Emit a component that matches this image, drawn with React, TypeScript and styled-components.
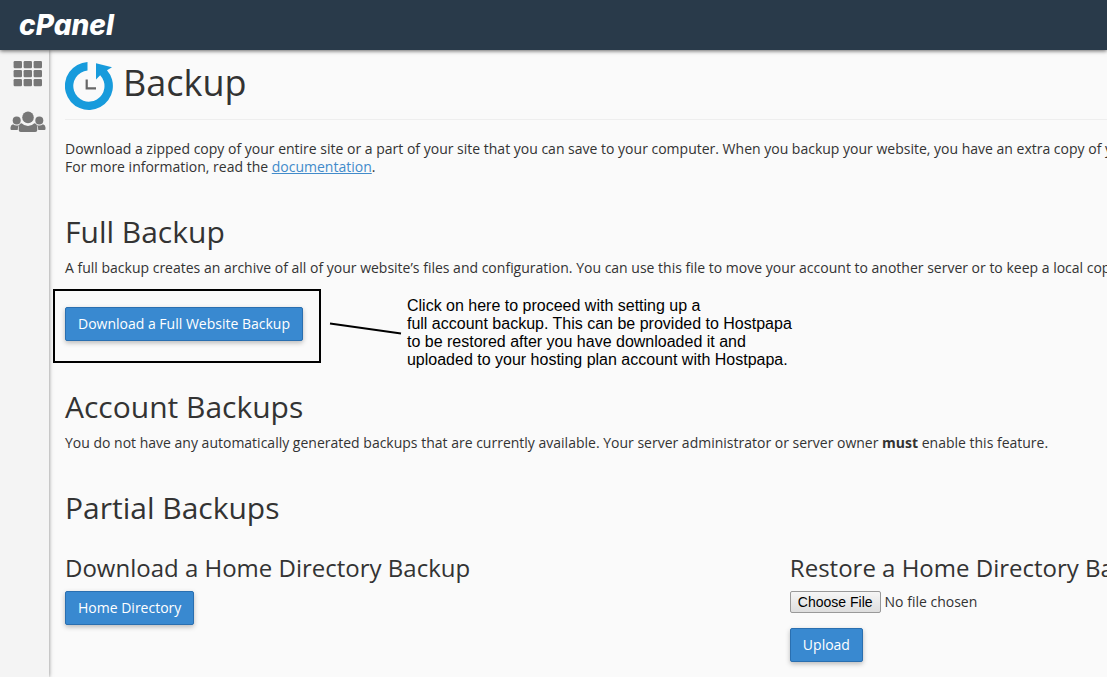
import React from "react";
import styled, { createGlobalStyle } from "styled-components";

const GlobalStyle = createGlobalStyle`
  * { box-sizing: border-box; }
  html, body, #root { height: 100%; }
  body {
    margin: 0;
    overflow: hidden;
    background: #fafafa;
    color: #333;
    font-family: "Open Sans", "Noto Sans", sans-serif;
    font-size: 14px;
    line-height: 18px;
  }
`;

const Page = styled.div`
  display: flex;
  flex-direction: column;
  min-height: 100%;
`;

const Header = styled.header`
  position: relative;
  display: flex;
  align-items: center;
  height: 50px;
  padding: 0 19px;
  background: #293a4a;
  box-shadow: 0 1px 4px rgba(0, 0, 0, 0.6);
`;

const Logo = styled.a`
  color: #fff;
  font-family: Inter, "Open Sans", sans-serif;
  font-size: 28px;
  font-style: italic;
  font-weight: 800;
  line-height: 48px;
  text-decoration: none;
`;

const Body = styled.div`
  display: flex;
  flex: 1;
`;

const Sidebar = styled.nav`
  display: flex;
  flex-direction: column;
  align-items: center;
  flex: none;
  gap: 21px;
  width: 49px;
  padding: 10px 0 0 6px;
  background: #f4f4f4;
  box-shadow: 0 0 4px rgba(0, 0, 0, 0.5);
`;

const SideLink = styled.a`
  display: block;
  height: 28px;
  color: #777;
  svg { display: block; fill: currentColor; }
`;

const Main = styled.main`
  flex: 1;
  min-width: 0;
  padding: 0 0 0 16px;
  overflow: hidden;
`;

const TitleBar = styled.div`
  display: flex;
  align-items: center;
  gap: 9px;
  height: 70px;
  padding-top: 2px;
  border-bottom: 1px solid #eee;
`;

const Title = styled.h1`
  margin: 0 0 6px;
  font-size: 36px;
  font-weight: 400;
  line-height: 40px;
`;

const Section = styled.section<{ $gap: number }>`
  padding-top: ${(p) => p.$gap}px;
`;

const Heading = styled.h2`
  margin: 0 0 10px;
  font-size: 30px;
  font-weight: 400;
  line-height: 34px;
`;

const SubHeading = styled.h3`
  margin: 0 0 10px;
  font-size: 24px;
  font-weight: 400;
  line-height: 26px;
  white-space: nowrap;
`;

const Text = styled.p`
  margin: 0;
  white-space: nowrap;
`;

const DocLink = styled.a`
  color: #428bca;
  text-decoration: underline;
`;

const Button = styled.button`
  display: block;
  height: 34px;
  padding: 0 12px;
  border: 1px solid #2a6fb0;
  border-radius: 2px;
  background: #3989d0;
  box-shadow: 0 2px 5px rgba(0, 0, 0, 0.26);
  color: #fff;
  font: inherit;
  white-space: nowrap;
`;

const ActionRow = styled.div`
  display: flex;
  align-items: flex-start;
  margin: 12px 0 0 -12px;
`;

const Highlight = styled.div`
  flex: none;
  padding: 16px 16px 20px 10px;
  border: 2px solid #000;
`;

const Pointer = styled.svg`
  flex: none;
  margin: 32px 4px 0 8px;
`;

const Note = styled.p`
  margin: 8px 0 0;
  color: #000;
  font-family: "Liberation Sans", Arial, sans-serif;
  font-size: 16px;
  line-height: 18px;
  white-space: nowrap;
`;

const Columns = styled.div`
  display: grid;
  grid-template-columns: minmax(0, 16fr) minmax(0, 7fr);
  margin-top: 30px;
`;

const FileInput = styled.input`
  display: block;
  width: 100%;
  height: 22px;
  margin-bottom: 15px;
  color: #333;
  font: inherit;
  line-height: 20px;
  &::file-selector-button {
    height: 22px;
    margin: 0 4px 0 0;
    padding: 0 7px;
    border: 1px solid #999;
    border-radius: 2px;
    background: linear-gradient(#f6f6f6, #dedede);
    color: #000;
    font-family: "Liberation Sans", Arial, sans-serif;
    font-size: 14px;
  }
`;

const GridIcon = () => (
  <svg width="30" height="28" viewBox="0 0 30 28" aria-hidden="true">
    {[1, 10, 19].map((y) =>
      [0, 10, 20].map((x) => (
        <rect key={`${x}-${y}`} x={x + 0.6} y={y} width="8.4" height="7.2" rx="1.2" />
      ))
    )}
  </svg>
);

const UsersIcon = () => (
  <svg width="36" height="28" viewBox="0 0 36 28" aria-hidden="true">
    <circle cx="18" cy="8.4" r="5.8" />
    <circle cx="6.7" cy="11.4" r="4" />
    <circle cx="29.3" cy="11.4" r="4" />
    <path d="M11.700 14.300a8.500 8.500 0 0 0 12.600 0c2.400.4 3 2.300 3 4.500v2.200q0 2-2 2H10.700q-2 0-2-2v-2.200c0-2.200.6-4.100 3-4.500Z" />
    <path d="M3 15.200a6 6 0 0 0 6 .8q-1.400 2-1.300 5H1.500Q.5 21 .5 20v-1.500q0-2.600 2.500-3.300Z" />
    <path d="M33 15.200a6 6 0 0 1-6 .8q1.400 2 1.300 5h6.200q1 0 1-1v-1.500q0-2.600-2.500-3.300Z" />
  </svg>
);

const BackupIcon = () => (
  <svg width="49" height="48" viewBox="0 0 49 48" aria-hidden="true">
    <path
      fill="#179bdc"
      d="M22.500 0A24 24 0 1 0 42 8.200L47 5.200L31 1.200V17.500L35.200 13.300A15.600 15.600 0 1 1 22.500 8.500Z"
    />
    <path d="M21.700 17.500V26.300H31" fill="none" stroke="#666" strokeWidth="2.200" />
  </svg>
);

export default function App() {
  return (
    <Page>
      <GlobalStyle />
      <Header>
        <Logo href="#">cPanel</Logo>
      </Header>
      <Body>
        <Sidebar>
          <SideLink href="#" aria-label="Home"><GridIcon /></SideLink>
          <SideLink href="#" aria-label="User manager"><UsersIcon /></SideLink>
        </Sidebar>
        <Main>
          <TitleBar>
            <BackupIcon />
            <Title>Backup</Title>
          </TitleBar>
          <Section $gap={20}>
            <Text>
              Download a zipped copy of your entire site or a part of your site that you can save to your computer. When you backup your website, you have an extra copy of your
              <br />
              For more information, read the <DocLink href="#">documentation</DocLink>.
            </Text>
          </Section>
          <Section $gap={39}>
            <Heading>Full Backup</Heading>
            <Text>
              A full backup creates an archive of all of your website’s files and configuration. You can use this file to move your account to another server or to keep a local copy
            </Text>
            <ActionRow>
              <Highlight>
                <Button type="button">Download a Full Website Backup</Button>
              </Highlight>
              <Pointer width="74" height="16" viewBox="0 0 74 16" aria-hidden="true">
                <path d="M1 2.500L72 12.500" stroke="#000" strokeWidth="2" />
              </Pointer>
              <Note>
                Click on here to proceed with setting up a<br />
                full account backup. This can be provided to Hostpapa<br />
                to be restored after you have downloaded it and<br />
                uploaded to your hosting plan account with Hostpapa.
              </Note>
            </ActionRow>
          </Section>
          <Section $gap={21}>
            <Heading>Account Backups</Heading>
            <Text>
              You do not have any automatically generated backups that are currently available. Your server administrator or server owner <strong>must</strong> enable this feature.
            </Text>
          </Section>
          <Section $gap={39}>
            <Heading>Partial Backups</Heading>
            <Columns>
              <div>
                <SubHeading>Download a Home Directory Backup</SubHeading>
                <Button type="button">Home Directory</Button>
              </div>
              <div>
                <SubHeading id="restore-label">Restore a Home Directory Backup</SubHeading>
                <FileInput type="file" aria-labelledby="restore-label" />
                <Button type="submit">Upload</Button>
              </div>
            </Columns>
          </Section>
        </Main>
      </Body>
    </Page>
  );
}
